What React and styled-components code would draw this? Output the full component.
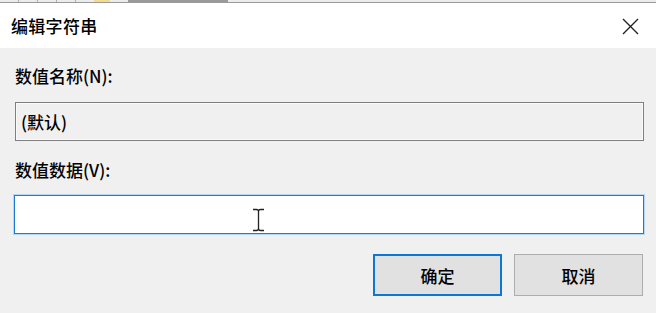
import React from "react";
import styled, { createGlobalStyle } from "styled-components";

const Global = createGlobalStyle`
  html, body { margin: 0; padding: 0; background: #f0f0f0; }
  body { font-family: "Noto Sans CJK SC", "Noto Sans", sans-serif; }
  * { box-sizing: border-box; }
`;

const Window = styled.div`
  width: 656px;
  height: 313px;
  display: flex;
  flex-direction: column;
  background: #f0f0f0;
  overflow: hidden;
`;

const Backdrop = styled.div`
  height: 3px;
  background: #ececec;
  border-bottom: 1px solid #9a9a9a;
  display: flex;
  gap: 18px;
  padding-left: 18px;
`;

const BackMark = styled.div`
  width: ${(p) => p.$w}px;
  height: 2px;
  background: ${(p) => p.$c};
`;

const TitleBar = styled.div`
  height: 45px;
  background: #ffffff;
  display: flex;
  align-items: center;
  justify-content: space-between;
  padding: 0 11px 0 11px;
`;

const Title = styled.div`
  font-size: 17px;
  font-weight: 500;
  color: #000;
  letter-spacing: 0.3px;
  line-height: 24px;
`;

const CloseButton = styled.div`
  width: 22px;
  height: 22px;
  display: flex;
  align-items: center;
  justify-content: center;
  margin-right: 4px;
  margin-top: 2px;
`;

const Body = styled.div`
  flex: 1;
  display: flex;
  flex-direction: column;
  padding: 16px 12px 0 15px;
`;

const Label = styled.div`
  font-size: 17px;
  font-weight: 500;
  line-height: 24px;
  color: #000;
  margin-bottom: ${(p) => p.$mb}px;
`;

const Field = styled.div`
  position: relative;
  height: 39px;
  display: flex;
  align-items: center;
  padding-left: 5px;
  font-size: 17px;
  font-weight: 500;
  color: #000;
  background: ${(p) => (p.$active ? "#ffffff" : "#f0f0f0")};
  border: 1px solid ${(p) => (p.$active ? "#1a7fd4" : "#7f7f7f")};
  box-shadow: ${(p) =>
    p.$active ? "0 0 0 1px #b3d7f5" : "inset 0 0 0 1px #fafafa"};
  margin-left: ${(p) => (p.$active ? -1 : 0)}px;
  margin-bottom: ${(p) => p.$mb}px;
`;

const Cursor = styled.svg`
  position: absolute;
  left: 237px;
  top: 12px;
`;

const ButtonRow = styled.div`
  display: flex;
  justify-content: flex-end;
  gap: 12px;
  padding-right: 1px;
`;

const Button = styled.div`
  width: 129px;
  height: 42px;
  display: flex;
  align-items: center;
  justify-content: center;
  font-size: 17px;
  font-weight: 500;
  color: #000;
  background: #e1e1e1;
  border: ${(p) => (p.$primary ? "2px solid #0a78d7" : "1px solid #adadad")};
`;

export default function App() {
  return (
    <>
      <Global />
      <Window>
        <Backdrop>
          <BackMark $w={1} $c="#b0b0b0" />
          <BackMark $w={1} $c="#b0b0b0" />
          <BackMark $w={1} $c="#b0b0b0" />
          <BackMark $w={1} $c="#b0b0b0" />
          <BackMark $w={16} $c="#f3dc8a" />
          <BackMark $w={100} $c="#9a9a9a" />
        </Backdrop>
        <TitleBar>
          <Title>编辑字符串</Title>
          <CloseButton>
            <svg width="17" height="17" viewBox="0 0 17 17">
              <path
                d="M1 1 L16 16 M16 1 L1 16"
                stroke="#222"
                strokeWidth="1.4"
                fill="none"
              />
            </svg>
          </CloseButton>
        </TitleBar>
        <Body>
          <Label $mb={14}>数值名称(N):</Label>
          <Field $mb={17}>(默认)</Field>
          <Label $mb={13}>数值数据(V):</Label>
          <Field $active $mb={20}>
            <Cursor width="13" height="24" viewBox="0 0 13 24">
              <path
                d="M1 1.5 H4.5 Q6.5 1.5 6.5 3.5 V20.5 Q6.5 22.5 4.5 22.5 H1 M12 1.5 H8.5 Q6.5 1.5 6.5 3.5 M6.5 20.5 Q6.5 22.5 8.5 22.5 H12"
                stroke="#222"
                strokeWidth="1.3"
                fill="none"
              />
            </Cursor>
          </Field>
          <ButtonRow>
            <Button $primary>确定</Button>
            <Button>取消</Button>
          </ButtonRow>
        </Body>
      </Window>
    </>
  );
}
